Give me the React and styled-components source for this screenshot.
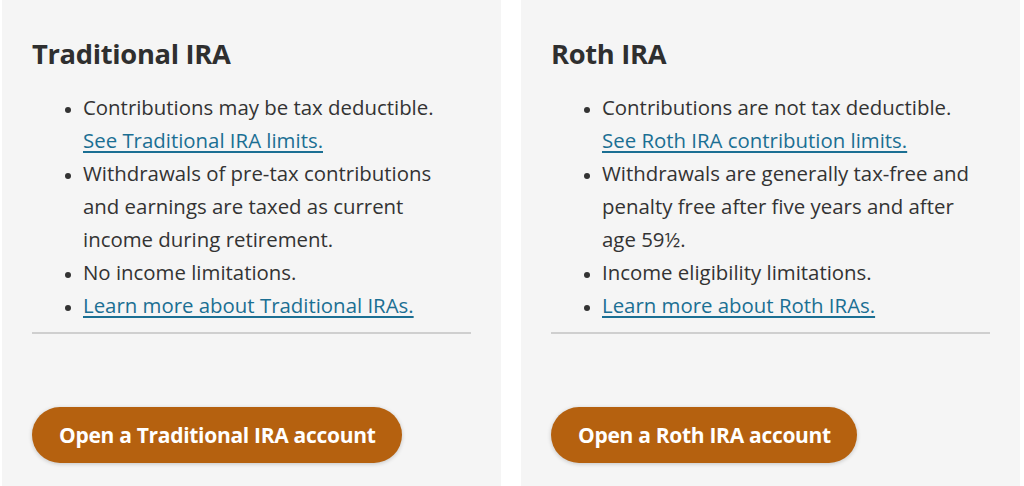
import React from "react";
import styled, { createGlobalStyle } from "styled-components";

const GlobalStyle = createGlobalStyle`
    html, body {
        margin: 0;
        padding: 0;
        background: #ffffff;
    }
    body {
        font-family: "Open Sans", "Liberation Sans", sans-serif;
        color: #333333;
    }
`;

const accounts = [
    {
        title: "Traditional IRA",
        items: [
            { text: "Contributions may be tax deductible.", link: "See Traditional IRA limits." },
            { text: "Withdrawals of pre-tax contributions and earnings are taxed as current income during retirement." },
            { text: "No income limitations." },
            { link: "Learn more about Traditional IRAs." },
        ],
        cta: "Open a Traditional IRA account",
    },
    {
        title: "Roth IRA",
        items: [
            { text: "Contributions are not tax deductible.", link: "See Roth IRA contribution limits." },
            { text: "Withdrawals are generally tax-free and penalty free after five years and after age 59½." },
            { text: "Income eligibility limitations." },
            { link: "Learn more about Roth IRAs." },
        ],
        cta: "Open a Roth IRA account",
    },
];

function App() {
    return (
        <>
            <GlobalStyle />
            <Page>
                {accounts.map((acc) => (
                    <Card key={acc.title}>
                        <Title>{acc.title}</Title>
                        <List>
                            {acc.items.map((item, i) => (
                                <li key={i}>
                                    {item.text}
                                    {item.text && item.link && <br />}
                                    {item.link && <a href="#">{item.link}</a>}
                                </li>
                            ))}
                        </List>
                        <Divider />
                        <OpenButton>{acc.cta}</OpenButton>
                    </Card>
                ))}
            </Page>
        </>
    );
}

const Page = styled.div`
    display: flex;
    gap: 20px;
    padding-left: 2px;
    height: 486px;
`;

const Card = styled.section`
    width: 499px;
    box-sizing: border-box;
    background: #f5f5f5;
    padding: 36px 30px 0 30px;
`;

const Title = styled.h2`
    margin: 0;
    font-size: 27.3px;
    line-height: 36px;
    font-weight: 700;
    color: #2f2f2f;
    letter-spacing: -0.3px;
`;

const List = styled.ul`
    margin: 19px 0 0 0;
    padding: 0 10px 0 51px;
    font-size: 20.4px;
    line-height: 33px;
    color: #333333;

    li::marker {
        font-size: 16px;
    }

    a {
        color: #1b6f93;
        text-decoration: underline;
        text-underline-offset: 3px;
    }
`;

const Divider = styled.hr`
    margin: 10px 0 0 0;
    border: none;
    border-top: 2px solid #cfcfcf;
`;

const OpenButton = styled.button`
    margin-top: 73px;
    height: 56px;
    padding: 0 26px 0 27px;
    border: none;
    border-radius: 28px;
    background: #b5610f;
    color: #ffffff;
    font-family: "Open Sans", "Liberation Sans", sans-serif;
    font-size: 21px;
    font-weight: 700;
    letter-spacing: -0.3px;
    box-shadow: 0 1px 4px rgba(0, 0, 0, 0.2);
    cursor: pointer;
`;

export default App;
